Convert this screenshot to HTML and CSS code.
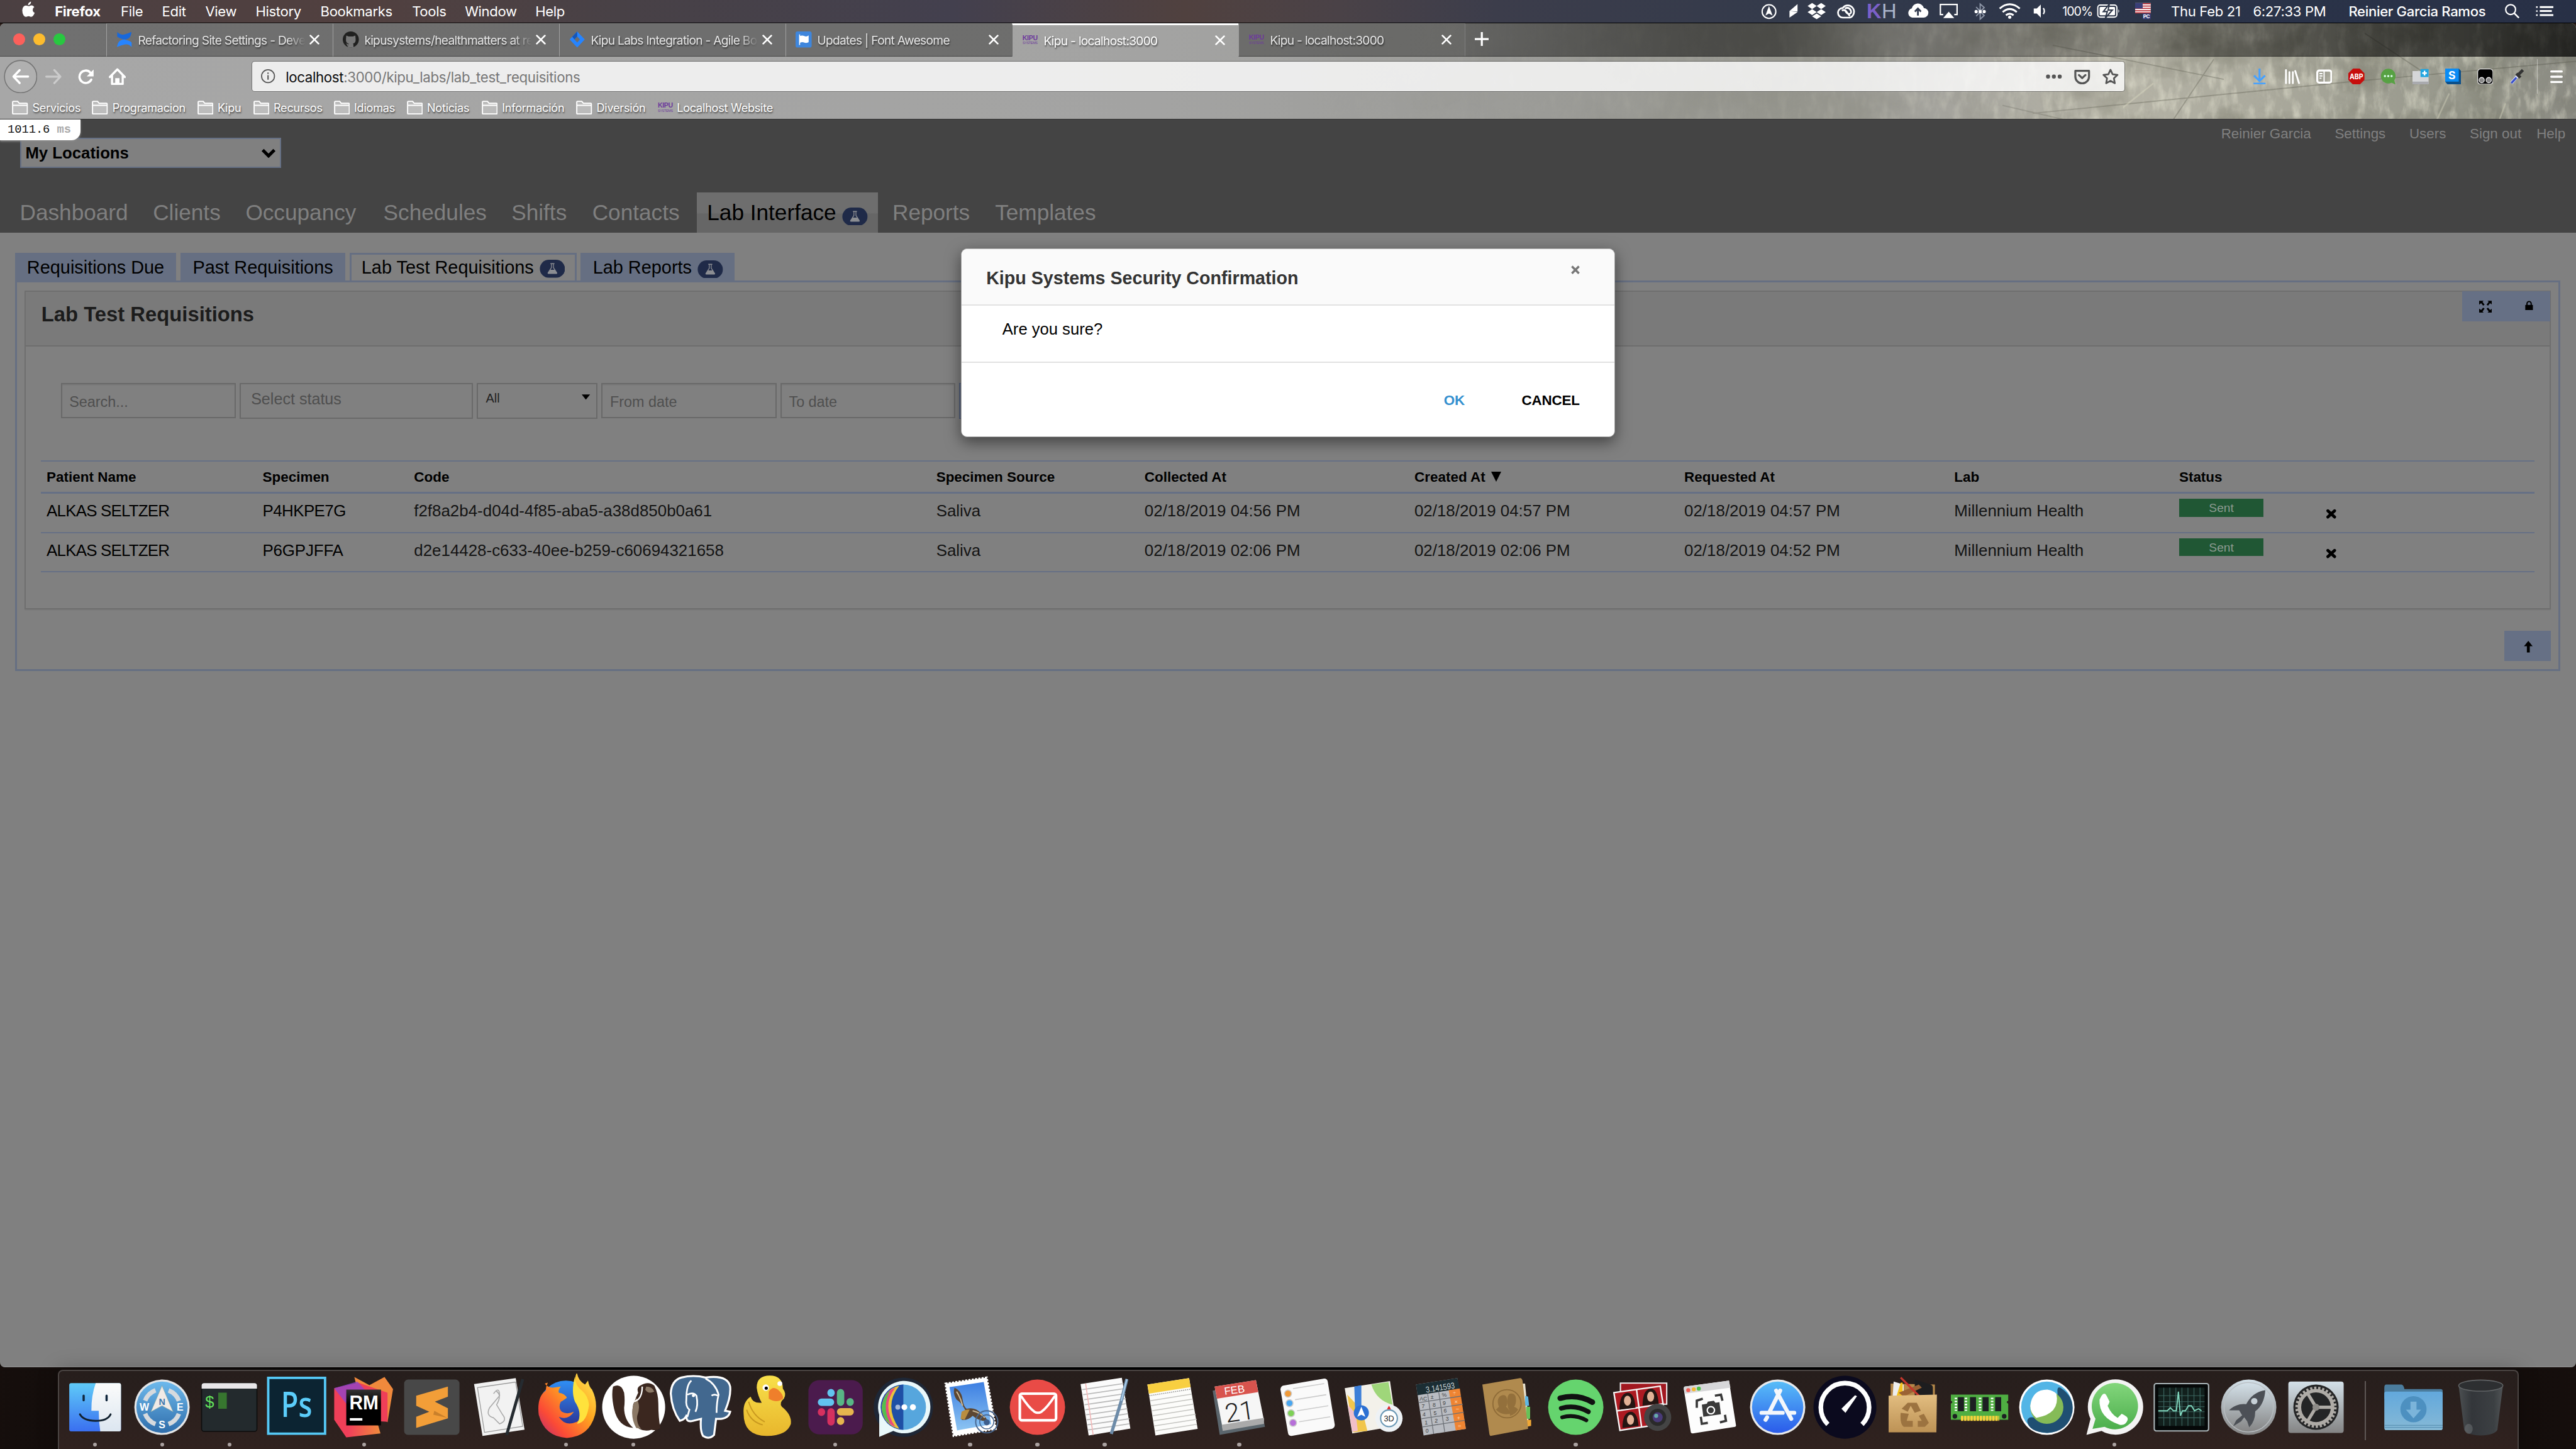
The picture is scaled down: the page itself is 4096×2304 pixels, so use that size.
FILE: index.html
```html
<!DOCTYPE html>
<html lang="en">
<head>
<meta charset="utf-8">
<title>Kipu - localhost:3000</title>
<link rel="stylesheet" href="styles.css">
</head>
<body>
<svg class="defs" width="0" height="0" aria-hidden="true">
  <defs>
    <symbol id="close" viewBox="0 0 10 10"><path d="M1 1l8 8M9 1L1 9" stroke="#fff" stroke-width="1.7" stroke-linecap="round"/></symbol>
    <symbol id="folder" viewBox="0 0 16 14"><path d="M.7 12V1.500q0-.8.8-.8h4.200l1.600 2h7.200q.8 0 .8.8V12.500q0 .8-.8.8h-13q-.8 0-.8-.8zM.7 4.700h14.600" fill="#fff" fill-opacity=".25" stroke="#fff" stroke-width="1.200"/></symbol>
    <symbol id="flask" viewBox="0 0 25 18"><rect width="25" height="18" rx="9" fill="#1f2a48"/><path d="M10.500 3.500h4v.9h-.6v3.200l3.300 5.200q.5 1.200-.7 1.200h-8q-1.200 0-.7-1.200l3.300-5.200V4.400h-.6z" fill="#8b8d92"/><path d="M11.900 4.400h1.200v3.500l1.300 2.100h-3.800l1.300-2.100z" fill="#1f2a48"/></symbol>
    <symbol id="cross" viewBox="0 0 11 10"><path d="M2.200 2L8.800 8.200M8.800 2L2.200 8.200" stroke="#000" stroke-width="3" stroke-linecap="round"/></symbol>
    <linearGradient id="finderL" x2="0" y2="1"><stop offset="0" stop-color="#5fcbf8"/><stop offset="1" stop-color="#3a6ff0"/></linearGradient>
    <linearGradient id="white" x2="0" y2="1"><stop offset="0" stop-color="#fbfbfb"/><stop offset="1" stop-color="#dce6f0"/></linearGradient>
    <linearGradient id="compass" x2="0" y2="1"><stop offset="0" stop-color="#6db9ec"/><stop offset="1" stop-color="#2f6dab"/></linearGradient>
    <linearGradient id="store" x2="0" y2="1"><stop offset="0" stop-color="#58bdf8"/><stop offset="1" stop-color="#2a5bea"/></linearGradient>
    <linearGradient id="fox" x1="1" y1="0" x2="0" y2="1"><stop offset="0" stop-color="#fff05a"/><stop offset=".4" stop-color="#ffa51f"/><stop offset=".75" stop-color="#fb4a36"/><stop offset="1" stop-color="#b02a7a"/></linearGradient>
    <linearGradient id="globe" x2="0" y2="1"><stop offset="0" stop-color="#2f8ff5"/><stop offset="1" stop-color="#2a2080"/></linearGradient>
    <linearGradient id="rmg" x2="1" y2="0"><stop offset="0" stop-color="#f03a5c"/><stop offset="1" stop-color="#f08b3c"/></linearGradient>
    <linearGradient id="dark" x2="0" y2="1"><stop offset="0" stop-color="#333"/><stop offset=".4" stop-color="#000"/></linearGradient>
    <linearGradient id="duck" x2="0" y2="1"><stop offset="0" stop-color="#f8e04a"/><stop offset="1" stop-color="#e8b62c"/></linearGradient>
    <linearGradient id="sky" x2="0" y2="1"><stop offset="0" stop-color="#3d7fe2"/><stop offset="1" stop-color="#8cc4f2"/></linearGradient>
    <linearGradient id="wa" x2="0" y2="1"><stop offset="0" stop-color="#83d67c"/><stop offset="1" stop-color="#4cae4c"/></linearGradient>
    <linearGradient id="steel" x2="0" y2="1"><stop offset="0" stop-color="#d3e0e8"/><stop offset="1" stop-color="#848484"/></linearGradient>
    <linearGradient id="bag" x2="0" y2="1"><stop offset="0" stop-color="#e2bd80"/><stop offset="1" stop-color="#bd9255"/></linearGradient>
    <linearGradient id="bluef" x2="0" y2="1"><stop offset="0" stop-color="#62a8dc"/><stop offset="1" stop-color="#86b9d6"/></linearGradient>
    <linearGradient id="trash" x2="1" y2="0"><stop offset="0" stop-color="#4c5052"/><stop offset=".3" stop-color="#33363a"/><stop offset=".8" stop-color="#3c4043"/><stop offset="1" stop-color="#515456"/></linearGradient>
  </defs>
</svg>
<div class="desktop">
  <header class="menubar">
    <nav class="menus">
      <svg class="apple" viewBox="0 0 14 17"><path d="M9.900.2q.2 1.600-.8 2.700T6.900 4Q6.700 2.500 7.700 1.500T9.900.2zM13.300 6q-1.600 1-1.600 2.800 0 2.200 2 3-.5 1.500-1.500 2.900-.9 1.300-2 1.300-.6 0-1.400-.4-.7-.3-1.400-.3-.8 0-1.500.3-.8.4-1.400.4-1.200 0-2.300-1.700Q.9 12.300.9 9.400.9 7 2 5.700q1.100-1.400 2.700-1.400.8 0 1.600.4.800.3 1.200.3t1.300-.4q.9-.4 1.700-.4 1.800.1 2.800 1.800z" fill="#fff"/></svg>
      <b>Firefox</b><span>File</span><span>Edit</span><span>View</span><span>History</span><span>Bookmarks</span><span>Tools</span><span>Window</span><span>Help</span>
    </nav>
    <div class="status">
      <svg viewBox="0 0 17 22"><circle cx="8" cy="11.500" r="6.800" fill="none" stroke="#fff" stroke-width="1.300"/><path d="M8 6l3.600 9.500L8 13.500l-3.600 2z" fill="#fff"/></svg>
      <svg viewBox="0 0 12 22"><path d="M9.500 4v7.500L1.500 11zM1.500 11v6.500l8-5.500z" fill="#fff"/></svg>
      <svg viewBox="0 0 22 22"><path d="M6.500 3l4.500 3-4.500 3L2 6zM15.500 3L20 6l-4.500 3L11 6zM6.500 9l4.500 3-4.500 3L2 12zM15.500 9l4.500 3-4.500 3-4.500-3zM11 13.500l4.500 2.800L11 19l-4.500-2.700z" fill="#fff"/></svg>
      <svg viewBox="0 0 22 22"><g fill="none" stroke="#fff" stroke-width="1.700"><path d="M7 17.500a4.800 4.800 0 010-9.600 6.200 6.200 0 1 1 7 9.600z"/><path d="M6 10.500q3-1.500 5 1.500l3 4M9 8.500q4-2 6 2 1 3-2 3.500-3-1-3.500-4"/></g></svg>
      <span class="kh"><b>K</b><span>H</span></span>
      <svg viewBox="0 0 22 22"><path d="M5.500 17.500a4.700 4.700 0 01-.6-9.200 6.200 6.200 0 0112-.4 4.800 4.800 0 01-.6 9.600z" fill="#fff"/><path d="M11 15.500V9M8 11.500l3-3 3 3" stroke="#333c50" stroke-width="1.800" fill="none"/></svg>
      <svg viewBox="0 0 22 22"><path d="M5.500 14.500H2.700v-10h16.600v10h-2.800" fill="none" stroke="#fff" stroke-width="1.400"/><path d="M11 11.500l5.500 6.500h-11z" fill="#fff"/></svg>
      <svg viewBox="0 0 22 22"><path d="M7 7l8 8.500-4 3.500V4l4 3.500L7 16" fill="none" stroke="#8e97a8" stroke-width="1.200"/><g fill="#fff"><circle cx="7" cy="11.500" r="1.600"/><circle cx="11" cy="11.500" r="1.600"/><circle cx="15" cy="11.500" r="1.600"/></g></svg>
      <svg viewBox="0 0 22 22"><g fill="none" stroke="#fff" stroke-width="1.900"><path d="M1 8.500q10-8.500 20 0M4 12q7-6 14 0M7.200 15.200q3.800-3 7.600 0"/></g><circle cx="11" cy="17" r="1.600" fill="#fff"/></svg>
      <svg viewBox="0 0 18 22"><path d="M3 8.500h3l4-4v13l-4-4H3z" fill="#fff"/><path d="M12.500 8q2 3 0 6" fill="none" stroke="#fff" stroke-width="1.400"/></svg>
      <span class="pct">100%</span>
      <svg viewBox="0 0 24 22"><rect x="1" y="5" width="19" height="12" rx="2.500" fill="none" stroke="#fff" stroke-width="1.200"/><rect x="2.800" y="6.800" width="15.400" height="8.400" rx="1" fill="#fff"/><path d="M21.500 9.200q1.600 1.800 0 3.600z" fill="#fff"/><path d="M12.500 4l-6 7.500h4L8.500 18l7-8h-4.200z" fill="#fff" stroke="#2d3649" stroke-width="1.300"/></svg>
      <svg viewBox="0 0 16 22"><path fill="#fff" d="M0 3h15.500v10H0z"/><path stroke="#b8303a" stroke-width="1.100" d="M0 3.600h15.500M0 6h15.500M0 8.400h15.500M0 10.700h15.500M0 12.700h15.500"/><path fill="#3a3f78" d="M0 3h7.500v5.500H0zM7.500 13.500h8V19h-8z"/><text x="8" y="18.200" font-size="5" font-weight="700" fill="#fff">PC</text></svg>
      <span class="date">Thu Feb 21</span><span class="time">6:27:33 PM</span><span class="user">Reinier Garcia Ramos</span>
      <svg viewBox="0 0 16 22"><circle cx="6.300" cy="9.500" r="4.900" fill="none" stroke="#fff" stroke-width="1.400"/><path d="M9.800 13l4.700 4.700" stroke="#fff" stroke-width="1.600"/></svg>
      <svg viewBox="0 0 18 22"><path d="M4 7h13.500M4 11h12M4 15h13.500" stroke="#fff" stroke-width="1.900"/><path d="M.3 7h1.600M.3 11h1.600M.3 15h1.600" stroke="#fff" stroke-width="1.500"/></svg>
    </div>
  </header>

  <main class="window">
    <div class="chrome">
      <svg class="texture" viewBox="0 0 1300 96" preserveAspectRatio="none">
        <filter id="grain" x="0" y="0" width="100%" height="100%"><feTurbulence type="fractalNoise" baseFrequency=".11 .045" numOctaves="5" seed="8"/><feColorMatrix values="0 0 0 0 .85  0 0 0 0 .84  0 0 0 0 .7  1.800 0 0 0 -.8"/></filter>
        <filter id="soot" x="0" y="0" width="100%" height="100%"><feTurbulence type="fractalNoise" baseFrequency=".016 .022" numOctaves="6" seed="3"/><feColorMatrix values="0 0 0 0 .15  0 0 0 0 .15  0 0 0 0 .11  0 1.900 0 0 -.85"/></filter>
        <rect width="1300" height="96" filter="url(#grain)"/>
        <rect width="1300" height="96" filter="url(#soot)"/>
        <path d="M760 90L1080 58l220-20M780 22l170 34M790 96l-60-14M1090 10l60 40M900 96l40-60" stroke="#444438" stroke-opacity=".4" stroke-width="1.200" fill="none"/>
        <path d="M1162 96l12-26M1224 96l6-16M850 84l30-24" stroke="#e8e6cc" stroke-opacity=".5" stroke-width="1.600" fill="none"/>
      </svg>
      <div class="tabs">
        <div class="lights"><i></i><i></i><i></i></div>
        <div class="tab"><svg class="fav" viewBox="0 0 16 16"><path d="M1 .5q3 3.500 7 2.500t7-2.500Q14.500 8 8 8 3 7 .8 5z" fill="#1868db"/><path d="M15.200 15.500q-3-3.500-7-2.500t-7.500 2.500Q1.500 8 8 8q5 1 7.200 3z" fill="#2684ff"/></svg><span>Refactoring Site Settings - Develop</span><svg class="x"><use href="#close"/></svg></div>
        <div class="tab"><svg class="fav" viewBox="0 0 16 16"><circle cx="8" cy="8" r="8" fill="#20201f"/><path d="M5.500 16v-3.500q-2 .3-2.600-1.500M5.800 12q-3-.6-2.600-4.500L3.500 4l2.300 1h4.400l2.300-1 .3 3.500q.4 3.900-2.600 4.500l.4 1V16H5.500z" fill="#777"/></svg><span>kipusystems/healthmatters at reports</span><svg class="x"><use href="#close"/></svg></div>
        <div class="tab"><svg class="fav" viewBox="0 0 16 16"><path d="M8 0l7.500 8L8 16 .5 8zM8 5L5.300 8 8 11l2.700-3z" fill="#2684ff" fill-rule="evenodd"/><path d="M8 0v5L5.300 8 3 5.300z" fill="#1556b8"/></svg><span>Kipu Labs Integration - Agile Board</span><svg class="x"><use href="#close"/></svg></div>
        <div class="tab"><svg class="fav" viewBox="0 0 16 16"><rect width="16" height="16" rx="2" fill="#3f86dc"/><path d="M4 3v10.500M4.500 5q2-1 4 0t4-.2v5.500q-2 1-4 .2t-4 .2z" fill="#fff" stroke="#fff"/></svg><span>Updates | Font Awesome</span><svg class="x"><use href="#close"/></svg></div>
        <div class="tab active"><span class="kipu"><b>KIPU</b><i>SYSTEMS</i></span><span>Kipu - localhost:3000</span><svg class="x"><use href="#close"/></svg></div>
        <div class="tab"><span class="kipu"><b>KIPU</b><i>SYSTEMS</i></span><span>Kipu - localhost:3000</span><svg class="x"><use href="#close"/></svg></div>
        <div class="strip"><svg class="plus" viewBox="0 0 14 14"><path d="M7 0v14M0 7h14" stroke="#fff" stroke-width="2"/></svg></div>
      </div>
      <div class="toolbar">
        <svg class="back" viewBox="0 0 34 34"><circle cx="17" cy="17" r="16.300" fill="#fff" fill-opacity=".1" stroke="#757575" stroke-width="1"/><path d="M24.500 17H10M16 10.500L9.800 17l6.200 6.500" fill="none" stroke="#fff" stroke-width="2.200" stroke-linecap="round" stroke-linejoin="round"/></svg>
        <svg class="fwd" viewBox="0 0 16 16"><path d="M1 8h13M9 1.500L15 8l-6 6.500" fill="none" stroke="#cbcbcb" stroke-width="2" stroke-linecap="round" stroke-linejoin="round"/></svg>
        <svg class="reload" viewBox="0 0 16 16"><path d="M13.200 11A6.200 6.200 0 1 1 12 3.700l1.500 2" fill="none" stroke="#fff" stroke-width="2.200" stroke-linecap="round"/><path d="M15.500 1v6.800H8.700z" fill="#fff"/></svg>
        <svg class="home" viewBox="0 0 16 16"><path d="M1 8.500L8 1.300l7 7.200M3 7v8h10V7" fill="none" stroke="#fff" stroke-width="2" stroke-linejoin="round" stroke-linecap="round"/><path d="M6.500 15v-5h3v5" fill="#fff" stroke="#fff"/></svg>
        <div class="url">
          <svg class="info" viewBox="0 0 14 14"><circle cx="7" cy="7" r="6.400" fill="none" stroke="#555" stroke-width="1.100"/><path d="M7 6v4.500M7 3.300v1.400" stroke="#555" stroke-width="1.300"/></svg>
          <span class="addr"><b>localhost</b>:3000/kipu_labs/lab_test_requisitions</span>
          <svg class="dots" viewBox="0 0 16 16"><g fill="#555"><circle cx="2.200" cy="8" r="2"/><circle cx="8" cy="8" r="2"/><circle cx="13.800" cy="8" r="2"/></g></svg>
          <svg class="pocket" viewBox="0 0 16 16"><path d="M1.200 2.300h13.600V8a6.800 6.800 0 01-13.600 0zM4.800 6.500L8 9.500l3.200-3" fill="none" stroke="#555" stroke-width="2" stroke-linejoin="round" stroke-linecap="round"/></svg>
          <svg class="star" viewBox="0 0 16 16"><path d="M8 1.200l2.100 4.500 4.900.6-3.600 3.400.9 4.900L8 12.200l-4.300 2.400.9-4.900L1 6.300l4.900-.6z" fill="none" stroke="#555" stroke-width="1.700" stroke-linejoin="round"/></svg>
        </div>
        <div class="addons">
          <svg viewBox="0 0 16 16"><path d="M8 0v12M2.500 7L8 12.300 13.500 7M2 15h12" stroke="#45a1ff" stroke-width="1.900" fill="none"/></svg>
          <svg viewBox="0 0 16 16"><path d="M1.800 1.500v13M5.200 3.500v11M8.600 3.500v11M11 2.500l3.700 12" stroke="#fff" stroke-width="1.800" stroke-linecap="round"/></svg>
          <svg viewBox="0 0 16 16"><rect x="1" y="2" width="14" height="12" rx="2" fill="none" stroke="#fff" stroke-width="2"/><path d="M7.800 2v12M3.200 5h3M3.200 7.300h3M3.200 9.600h2" stroke="#fff" stroke-width="1.200"/></svg>
          <svg viewBox="0 0 16 16"><path d="M4.700 0h6.600L16 4.700v6.600L11.300 16H4.700L0 11.300V4.700z" fill="#c70d0c"/><text x="8" y="10.900" text-anchor="middle" font-size="7.500" textLength="13.500" lengthAdjust="spacingAndGlyphs" font-weight="700" fill="#fff">ABP</text></svg>
          <svg viewBox="0 0 16 16"><circle cx="7.800" cy="7.500" r="7.300" fill="#57a143"/><path d="M9 13l6 3-1.500-5z" fill="#57a143"/><g fill="#dfe"><circle cx="4.500" cy="7.500" r="1.100"/><circle cx="7.800" cy="7.500" r="1.100"/><circle cx="11.100" cy="7.500" r="1.100"/></g></svg>
          <svg viewBox="0 0 16 16"><path d="M0 2.500h16v13H0z" fill="#d5d6d8"/><path d="M0 13h16v2.600H0z" fill="#a9aaae"/><path d="M8 .5h8v8H8z" fill="#23a5e0"/><path d="M12 2.200v4.600M9.700 4.500h4.600" stroke="#fff" stroke-width="1.500"/></svg>
          <svg viewBox="0 0 16 16"><path d="M0 0h13.500L16 2.500V16H2.500L0 13z" fill="#0b4f8a"/><path d="M0 0h13.500v13H0z" fill="#0a8cf5"/><text x="6.800" y="10.600" text-anchor="middle" font-size="11" font-weight="700" fill="#fff">S</text></svg>
          <svg viewBox="0 0 16 16"><rect x=".4" y=".4" width="15.200" height="15.200" rx="3" fill="#000" stroke="#ddd" stroke-width=".8"/><circle cx="4.400" cy="11.500" r="2.600" fill="#888" stroke="#eee" stroke-width=".8"/><circle cx="11.400" cy="11.500" r="2.600" fill="#888" stroke="#eee" stroke-width=".8"/></svg>
          <svg viewBox="0 0 16 16"><path d="M2 14.500L8.500 7" stroke="#dfe4ff" stroke-width="3"/><path d="M2 14.500L7 9" stroke="#3a50c8" stroke-width="2"/><path d="M8.500 6.500L13.500 1.500M7 5l4 4" stroke="#333" stroke-width="3"/></svg>
        </div>
        <i class="rule"></i>
        <svg class="burger" viewBox="0 0 12 12"><path d="M1 1h10M1 6h10M1 11h10" stroke="#fff" stroke-width="2" stroke-linecap="round"/></svg>
      </div>
      <div class="bookmarks">
        <span><svg><use href="#folder"/></svg>Servicios</span><span><svg><use href="#folder"/></svg>Programacion</span><span><svg><use href="#folder"/></svg>Kipu</span><span><svg><use href="#folder"/></svg>Recursos</span><span><svg><use href="#folder"/></svg>Idiomas</span><span><svg><use href="#folder"/></svg>Noticias</span><span><svg><use href="#folder"/></svg>Información</span><span><svg><use href="#folder"/></svg>Diversión</span><span><i class="kipu"><b>KIPU</b><i>SYSTEMS</i></i>Localhost Website</span>
      </div>
    </div>

    <div class="page">
      <div class="top">
        <div class="row">
          <div class="select">My Locations<svg viewBox="0 0 14 9"><path d="M1.500 1.500L7 7l5.500-5.500" fill="none" stroke="#000" stroke-width="3"/></svg></div>
          <div class="links"><span>Reinier Garcia</span><span>Settings</span><span>Users</span><span>Sign out</span><span>Help</span></div>
        </div>
        <nav class="mainnav"><a>Dashboard</a><a>Clients</a><a>Occupancy</a><a>Schedules</a><a>Shifts</a><a>Contacts</a><a class="on">Lab Interface<svg class="flask"><use href="#flask"/></svg></a><a>Reports</a><a>Templates</a></nav>
        <div class="profiler">1011.6 <b>ms</b></div>
      </div>
      <div class="subnav"><a>Requisitions Due</a><a>Past Requisitions</a><a class="on">Lab Test Requisitions<svg class="flask"><use href="#flask"/></svg></a><a>Lab Reports<svg class="flask"><use href="#flask"/></svg></a></div>
      <section class="content">
        <div class="panel">
          <div class="phead"><h1>Lab Test Requisitions</h1>
            <div class="pbtns">
              <svg viewBox="0 0 13 12"><path d="M0 0h4.500L3.400 1.200 5.500 4 4 5 2 2.500 0 4zM13 0H8.500l1.100 1.200L7.500 4 9 5l2-2.500L13 4zM0 12h4.500l-1.100-1.200L5.500 8 4 7 2 9.500 0 8zM13 12H8.500l1.100-1.200L7.500 8 9 7l2 2.500L13 8z"/></svg>
              <svg class="lock" viewBox="0 0 8 10"><path d="M0 4.500h8V10H0z"/><path d="M1.800 5V3.200a2.200 2.300 0 014.400 0V5" fill="none" stroke="#000" stroke-width="1.300"/></svg>
            </div>
          </div>
          <div class="filters">
            <div class="input">Search...</div><div class="pick">Select status</div><div class="all">All<svg viewBox="0 0 8 5"><path d="M0 0h8L4 5z"/></svg></div><div class="input">From date</div><div class="input">To date</div><div class="go"></div>
          </div>
          <table>
            <colgroup><col class="c1"><col class="c2"><col class="c3"><col class="c4"><col class="c5"><col class="c5"><col class="c5"><col class="c8"><col class="c9"><col></colgroup>
            <thead><tr><th>Patient Name</th><th>Specimen</th><th>Code</th><th>Specimen Source</th><th>Collected At</th><th>Created At <svg class="sort" viewBox="0 0 10 10"><path d="M0 0h10L5 10z"/></svg></th><th>Requested At</th><th>Lab</th><th>Status</th><th></th></tr></thead>
            <tbody>
              <tr><td class="name">ALKAS SELTZER</td><td class="spec">P4HKPE7G</td><td>f2f8a2b4-d04d-4f85-aba5-a38d850b0a61</td><td>Saliva</td><td>02/18/2019 04:56 PM</td><td>02/18/2019 04:57 PM</td><td>02/18/2019 04:57 PM</td><td>Millennium Health</td><td><span class="sent">Sent</span></td><td><svg class="del"><use href="#cross"/></svg></td></tr>
              <tr><td class="name">ALKAS SELTZER</td><td class="spec alt">P6GPJFFA</td><td>d2e14428-c633-40ee-b259-c60694321658</td><td>Saliva</td><td>02/18/2019 02:06 PM</td><td>02/18/2019 02:06 PM</td><td>02/18/2019 04:52 PM</td><td>Millennium Health</td><td><span class="sent">Sent</span></td><td><svg class="del"><use href="#cross"/></svg></td></tr>
            </tbody>
          </table>
        </div>
        <div class="up"><svg viewBox="0 0 9 12"><path d="M4.500 0L9 5.500H6V12H3V5.500H0z"/></svg></div>
      </section>
    </div>
  </main>

  <div class="modal">
    <div class="mhead">Kipu Systems Security Confirmation<svg viewBox="0 0 10 9"><path d="M1.500 1l7 7M8.500 1l-7 7" stroke="#777" stroke-width="2.200"/></svg></div>
    <div class="mbody">Are you sure?</div>
    <div class="mfoot"><b class="ok">OK</b><b>CANCEL</b></div>
  </div>

  <footer class="dock">
    <div class="app run"><svg viewBox="0 0 67 67"><rect x="8.200" y="9.500" width="51.400" height="48" rx="2" fill="url(#finderL)"/><path d="M34.500 9.500H57.600q2 0 2 2v44q0 2-2 2H39q-1.500-10-1.500-20.500h-7.300Q30 22 34.500 9.500z" fill="url(#white)"/><path d="M22.500 22v4.500M45.300 22v4.500" stroke="#10263c" stroke-width="2.200" stroke-linecap="round"/><path d="M18.800 40.500q3.500 6.500 15.500 6.500t15-6.500" fill="none" stroke="#10202e" stroke-width="1.800" stroke-linecap="round"/></svg></div>
    <div class="app run"><svg viewBox="0 0 67 67"><circle cx="33.500" cy="33.500" r="27.500" fill="#e4e6e8"/><circle cx="33.500" cy="33.500" r="25.500" fill="url(#compass)"/><circle cx="33.500" cy="33.500" r="18" fill="none" stroke="#d6dade" stroke-width="4.500" stroke-dasharray="15 13.270" stroke-dashoffset="-6.600"/><path d="M33.500 12l11 26-11-6-11 6z" fill="#f1eae6" stroke="#8aa" stroke-width=".5"/><g font-size="10" font-weight="700" text-anchor="middle" fill="#fff"><text x="16" y="37">W</text><text x="51.500" y="37">E</text><text x="33.500" y="54.500">S</text><text x="33.500" y="31" font-size="9" fill="#3d78ae">N</text></g></svg></div>
    <div class="app run"><svg viewBox="0 0 67 67"><rect x="6" y="9.500" width="55" height="48" rx="2.500" fill="#232a2d" stroke="#0d0d0d"/><path d="M6 15V12q0-2.500 2.500-2.500h50q2.500 0 2.500 2.500v3z" fill="#e8e6e8"/><text x="9.500" y="33.500" font-size="16" fill="#63e35c">$</text><path d="M22.500 19h8.500v16h-8.500z" fill="#37762f"/></svg></div>
    <div class="app"><svg viewBox="0 0 67 67"><path d="M5.300 4.300h56.500v55.500H5.300z" fill="#0c2432" stroke="#55c8f5" stroke-width="2.400"/><text x="33.500" y="43" text-anchor="middle" font-size="35" textLength="31" lengthAdjust="spacingAndGlyphs" font-family="Open Sans" font-weight="600" fill="#5bcdfa">Ps</text></svg></div>
    <div class="app run"><svg viewBox="0 0 67 67"><path d="M24 3.500l15 8 15-8 8.500 12-5.500 33-28-25z" fill="#f0893c"/><path d="M4 14.500L28 9l29 10v29L26 46l-10 17.500L4 46z" fill="#ef3f58"/><path d="M4 14.500L27 8l13 14-24 8z" fill="#8b46d0" opacity=".75"/><path d="M16 63.500l34-4-4-14-27-4z" fill="url(#rmg)"/><path d="M16 16h34.500v35.500H16z" fill="url(#dark)"/><text x="33.500" y="35.500" text-anchor="middle" font-size="20" textLength="29" lengthAdjust="spacingAndGlyphs" font-weight="700" fill="#fff">RM</text><path d="M19.500 44.300h12.500v2.500H19.500z" fill="#fff"/></svg></div>
    <div class="app"><svg viewBox="0 0 67 67"><rect x="6" y="6" width="55" height="55" rx="4" fill="#484848"/><path d="M49.500 13v10L36.500 28l13 6.500v10L18 54V43l13-5-13-6V22z" fill="#f29e38"/><path d="M36 37l13 7-14-3z" fill="#c9802b"/></svg></div>
    <div class="app"><svg viewBox="0 0 67 67"><path d="M8.600 10.500L50 4.500l8.800 51.300L17 62z" fill="#f2f2f2"/><path d="M12 14l38-5.500 7 44-38 6z" fill="none" stroke="#999" stroke-width=".8"/><path d="M28 20q6-8 6 2l-10 12q-4 8 4 10l6 6q8-3 3-9l-6-10q6-10-1-14" fill="none" stroke="#aaa" stroke-width="1"/><path d="M57 5.500L41 61" stroke="#252b30" stroke-width="3"/></svg></div>
    <div class="app run"><svg viewBox="0 0 67 67"><circle cx="33" cy="34" r="27" fill="url(#globe)"/><path d="M12 10q3 4 8 4l8-1q-3 3-2 6 6 1 8 5-4 3-6 4-3 6 1 10 5 3 12 0-6 9-15 5 6 10 18 5 12-8 6-24-6-8-8-14 0-8 2-11 1 8 8 12l3-4q1 6 4 9 6 12 3 25-6 22-28 23-22-1-28-23-2-18 7-24 0-4 2-8z" fill="url(#fox)"/><path d="M42 3q0 9 7 14 6 5 7 14-2 18-12 19 6-10-2-22-4-10 0-25z" fill="#ffe23c"/></svg></div>
    <div class="app run"><svg viewBox="0 0 67 67"><circle cx="33.500" cy="33.500" r="31.300" fill="#fff"/><path d="M13 13q8-4 11 6 1 8 0 15 0 12 9 20-15-1-19-19-3-13-1-22zM40 12q8-5 14 0 4 8 4 18 0 14 2 24-4 3-9 2-6 2-12-1-9-8-6-24 3-8 5-12-2-5 2-7z" fill="#3b271f"/><path d="M36 24q5 8 1 18-1 8 4 13l-5-1q-8-14 0-30zM46 13q6 0 8 5-6 3-9-2z" fill="#8b7865"/><path d="M32 20q-2 10 4 7t6-14" fill="none" stroke="#fff" stroke-width="1.500"/></svg></div>
    <div class="app"><svg viewBox="0 0 67 67"><path d="M14 4Q4 7 3.500 20q1 16 9 27 5-1 7-6-2 8 6 6l8-2q-1 12 2 17 6 4 11-1l2-16q12 1 14-7l-5-1q6-14 5-24Q60 1 38 4 26 1 14 4z" fill="#42688f" stroke="#fff" stroke-width="2"/><path d="M24 7q-5 4-5 18-1 8 3 11l-2 7M38 5q10 5 13 16-2 8-2 18M20 21q6-3 9 1 2 10-1 16M44 22q3-2 6 0" fill="none" stroke="#fff" stroke-width="1.700"/><circle cx="26" cy="22" r="1.500" fill="#fff"/></svg></div>
    <div class="app"><svg viewBox="0 0 67 67"><path d="M22 14q0-12 13-12t13 13q4 5 1 10-5 4-2 8 10 8 9 17-4 12-24 12-23 0-23-22-1-12 7-17 2 7 11 6-4-7-5-15z" fill="url(#duck)"/><path d="M34 18q4-6 9-2 6 5 5 9-6 5-14 0z" fill="#ef7f2b"/><circle cx="31" cy="14" r="3.200" fill="#fff"/><circle cx="31.500" cy="14.500" r="1.600"/><circle cx="45" cy="10" r="2.400" fill="#fff"/><path d="M14 28q4 14 16 20M12 36q4 12 16 15" stroke="#c9991f" stroke-width="1.200" fill="none"/></svg></div>
    <div class="app run"><svg viewBox="0 0 67 67"><rect x="6.500" y="6.500" width="54" height="54" rx="11" fill="#4b1b4d"/><g stroke-width="7.300" stroke-linecap="round" fill="none"><path d="M29 19v.5M19.500 28.500h9" stroke="#62c4ef"/><path d="M38.500 19v9.500M48 28.500v-.5" stroke="#58b585"/><path d="M38.500 38h9.500M38.500 47.500V47" stroke="#e5b54e"/><path d="M29 38v10M19.500 38v.5" stroke="#d5305f"/></g></svg></div>
    <div class="app"><svg viewBox="0 0 67 67"><circle cx="34" cy="33.500" r="29.500" fill="#1e2736"/><path d="M10 63V41A26 26 0 1 1 24 57z" fill="#e9f8fa"/><circle cx="34" cy="33.500" r="22.500" fill="#56a6dd"/><path d="M34 11a22.500 22.500 0 000 45z" fill="#1f4fa5"/><path d="M30 12q-16 20 0 43-16-4-17.500-21Q14 16 30 12z" fill="#e9c23d"/><path d="M26 14q-14 18 0 39-12-5-13.500-19Q14 18 26 14z" fill="#ea4a7e"/><path d="M21 17q-9 16 0 33-7-5-8.500-16Q14 22 21 17z" fill="#53c24c"/><g fill="#fff"><circle cx="28.500" cy="33.500" r="2.500" opacity=".6"/><circle cx="35" cy="33.500" r="2.900"/><circle cx="43.500" cy="33.500" r="3"/></g></svg></div>
    <div class="app run"><svg viewBox="0 0 67 67"><path d="M9 10l41-6 9 51-42 7z" fill="#fff" stroke="#fff" stroke-width="2" stroke-dasharray="2 1.300"/><path d="M13 13.500l34-5 7.500 42-34 6z" fill="url(#sky)"/><path d="M18 14q7 3 8 12 1 7 4 9 8-2 14 4 5 4 7 8-8 1-15-5-5 5-11 4-1-6 4-9-4-8-9-11-4-6-2-12z" fill="#5c4632"/><path d="M20 18q4 6 6 14M36 37q8 2 12 7" stroke="#c9b796" stroke-width="1.300" fill="none"/><path d="M25 38q4-3 8-2l-5 10-4-1z" fill="#b98d3f"/><circle cx="50" cy="48" r="11" fill="none" stroke="#49678f" stroke-width="1.200"/><circle cx="50" cy="48" r="7" fill="none" stroke="#49678f" stroke-width="1"/><circle cx="50" cy="48.500" r="3" fill="#3f5f8c"/></svg></div>
    <div class="app run"><svg viewBox="0 0 67 67"><circle cx="33.500" cy="33.500" r="27.500" fill="#e94b46"/><rect x="16" y="20" width="36" height="26.500" rx="2" fill="none" stroke="#fff" stroke-width="2.600"/><path d="M17 22q8 12 13.500 16 3.500 2 7 0Q43 34 51 22" fill="none" stroke="#fff" stroke-width="2.400"/></svg></div>
    <div class="app run"><svg viewBox="0 0 67 67"><path d="M9.500 10.500l41-6.300 8.500 50.500L17.500 61.500z" fill="#fbfbfb"/><path d="M11 16l41-6M12 21l41-6M13 26l41-6M13.500 31l41-6M14 36l41-6M15 41l41-6M15.500 46l41-6M16 51l42-6M17 56l41-6" stroke="#bbb" stroke-width="1.100"/><path d="M14.500 10l7.500 51" stroke="#f3b6b6"/><path d="M55.500 5.500L50 27 40 60" stroke="#6d8ba8" stroke-width="3.200" fill="none"/><path d="M55.500 5.500L50 27" stroke="#a8cbe8" stroke-width="1.500"/></svg></div>
    <div class="app"><svg viewBox="0 0 67 67"><path d="M9 11l41.500-6.500L59 55 17 61.500z" fill="#fcfcfa"/><path d="M9 11l41.500-6.500 1.500 9L10.500 20z" fill="#f8cf40"/><path d="M11 22l41-6.500" stroke="#888" stroke-dasharray="1 1"/><path d="M12 27l41-6.500M12.500 32l41-6.500M13.500 37l41-6.500M14 42l41-6.500M15 47l42-6.500M16 52l42-6.500M17 57l41-6.500" stroke="#c6c6c2" stroke-width="1"/></svg></div>
    <div class="app run"><svg viewBox="0 0 67 67"><path d="M7 17l43-8 9 44-45 8z" fill="#5b666d"/><path d="M9 13l41-6.500 8 40L17 55z" fill="#f6f6f6"/><path d="M9 13l41-6.500 2.300 12L11.300 25z" fill="#d8544e"/><path d="M16 51l42-7v6l-41 7z" fill="#aaa"/><g transform="rotate(-8 33 33)" text-anchor="middle"><text x="31" y="19.500" font-size="10.500" fill="#fff">FEB</text><text x="33" y="47" font-size="26" font-family="Roboto" font-weight="300" fill="#222">21</text></g></svg></div>
    <div class="app"><svg viewBox="0 0 67 67"><path d="M10 12l41-7q3 0 3.500 3l7 43q0 3-3 4l-40 7q-3 0-3.500-3L7.500 16q0-3 2.500-4z" fill="#fafafa"/><path d="M20 15l31-5M22 26l31-5M24 37l31-5M26 48l31-5" stroke="#ccc"/><g stroke="#ccc"><circle cx="15" cy="20" r="3.500" fill="#f09a38"/><circle cx="16.500" cy="29.500" r="3.500" fill="#4aa7f0"/><circle cx="18" cy="39.500" r="3.500" fill="#7ed156"/><circle cx="20" cy="49" r="3.500" fill="#b66fd8"/></g></svg></div>
    <div class="app"><svg viewBox="0 0 67 67"><path d="M4.500 14.500l45-7L56 52l-44 7.500z" fill="#f3f1ea"/><path d="M31 11l17-2.500L52 31q-16-4-21-20z" fill="#9fd67a"/><path d="M7 21l15 16 5 20-14 1.500z" fill="#f1c64c"/><path d="M7.500 31l8 9 2 17-5.500 1z" fill="#f1bfc9"/><path d="M14 13l7-1.500V42h-6z" fill="#3c7fd8"/><circle cx="21" cy="39" r="7.500" fill="#2d71d3"/><path d="M21 33l4 10-4-2-4 2z" fill="#fff"/><circle cx="48.500" cy="44.500" r="13.500" fill="#eef2f5"/><circle cx="48.500" cy="44.500" r="8.300" fill="#fff" stroke="#6a98b5" stroke-width="1.300"/><text x="48.500" y="47.500" text-anchor="middle" font-size="8" fill="#222">3D</text><path d="M48.500 32l2 3.500h-4z" fill="#e02020"/></svg></div>
    <div class="app"><svg viewBox="0 0 67 67"><path d="M8.500 11l41-6.500L58 55 16 61.500z" fill="#b9bcc2"/><path d="M8.500 11l41-6.500L52 15 10 21.500z" fill="#1b2d33"/><path d="M41 16.500l11-1.600L58 55l-10 1.600z" fill="#ee8432"/><path d="M11 29l42-6.500M12 37l43-6.500M14 45l42-6.500M15 53l42-6.500M20 20l6 40M31 18l6 40" stroke="#6c7076" stroke-width=".8"/><g transform="rotate(-9 33 33)"><text x="50" y="17" text-anchor="end" font-size="8.500" textLength="29" lengthAdjust="spacingAndGlyphs" fill="#c8d4d6">3.141593</text></g><g font-size="5.500" fill="#444"><text x="12" y="27">AC</text><text x="23" y="25">±</text><text x="34" y="23">%</text><text x="14" y="34.500">7</text><text x="25" y="33">8</text><text x="35" y="31">9</text><text x="15" y="42.500">4</text><text x="26" y="41">5</text><text x="36" y="39">6</text><text x="17" y="50.500">1</text><text x="27" y="49">2</text><text x="38" y="47">3</text><text x="18" y="58.500">0</text></g><g font-size="6" fill="#fbd9b8"><text x="45" y="21.500">÷</text><text x="46.500" y="30">×</text><text x="48" y="37.500">−</text><text x="49" y="46">+</text><text x="50" y="54">=</text></g></svg></div>
    <div class="app"><svg viewBox="0 0 67 67"><path d="M45 10h5l4 42-7 4z" fill="#e9e2cf"/><path d="M50 22l3 1 1 9h-4z" fill="#5fb7e4"/><path d="M51 33h4v12h-4z" fill="#67c258"/><path d="M51 46h5v6l-5 1z" fill="#f0a836"/><path d="M7.500 11L45 4.500q2 0 2.500 3L53 55 15.500 62q-1-1-1-2z" fill="#b08a4e"/><circle cx="32" cy="30" r="14" fill="none" stroke="#8f6c38" stroke-width="1.200"/><path d="M26 22q5-2 6 3 1 6-1 8 4 3 4 7-8 2-14-4l3-3q-3-8 2-11zM35 20q6-1 6 6 0 5-2 7 3 1 4 3-3 5-8 6 0-6-2-8-2-12 2-14z" fill="#93703c"/></svg></div>
    <div class="app run"><svg viewBox="0 0 67 67"><circle cx="33.500" cy="33.500" r="27.500" fill="#65d46e"/><g fill="none" stroke="#111" stroke-linecap="round"><path d="M18 24.500q17-4.500 32 4" stroke-width="5.500"/><path d="M19 34.500q14-4 27 3.500" stroke-width="4.600"/><path d="M20 43.500q12-3.500 24 3" stroke-width="3.800"/></g></svg></div>
    <div class="app"><svg viewBox="0 0 67 67"><path d="M11 9.500h46v21H11z" fill="#a21820" stroke="#eee" stroke-width="1.300"/><path d="M4.500 19l46-6.500 6 37-46 7z" fill="#ad1a22" stroke="#f4f4f4" stroke-width="1.500"/><path d="M27 16l5 37M8 37l46-7" stroke="#f4f4f4" stroke-width="1.500"/><g fill="#241512"><path d="M10 36q0-16 8-17 7 0 8 15zM33 32q0-16 8-17 7 0 8 15zM13 54q0-15 8-16 7 0 8 14z"/></g><g fill="#e3b196"><ellipse cx="18" cy="27" rx="3.500" ry="5"/><ellipse cx="41" cy="23" rx="3.500" ry="5"/><ellipse cx="21" cy="46" rx="3.500" ry="5"/></g><circle cx="48" cy="43.500" r="13.500" fill="#444"/><circle cx="48" cy="43.500" r="8.500" fill="#2a2a2a"/><circle cx="48" cy="43.500" r="5" fill="#493a78"/><circle cx="46.500" cy="42" r="2" fill="#6aa"/></svg></div>
    <div class="app"><svg viewBox="0 0 67 67"><path d="M8 13l44-6 7 44.500q0 1-1 1.500L16 59.500q-2 0-2-1.500L7 15z" fill="#fdfdfd"/><path d="M7 15q0-2 1-2l44-6 1.500 7L8.500 20z" fill="#d7d7d9"/><circle cx="11.500" cy="16.500" r="2" fill="#ef5f57"/><circle cx="17" cy="15.700" r="2" fill="#f5b932"/><circle cx="22" cy="15" r="2" fill="#4ec24a"/><g fill="none" stroke="#3a3a3a" stroke-width="2.300"><path d="M20 34v-7l6-2M38 22l6-1 1.500 6M48 41l1 6-6 1.500M24 43l1 7 6-1"/></g><path d="M25 31l5-1 1-2 6-1 1.500 2 4-.5 1.500 12-17.500 2.500z" fill="#3a3a3a"/><circle cx="34" cy="36.500" r="3.600" fill="none" stroke="#fff" stroke-width="1.400"/></svg></div>
    <div class="app"><svg viewBox="0 0 67 67"><circle cx="33.500" cy="33.500" r="27.500" fill="#e8eaec"/><circle cx="33.500" cy="33.500" r="25.500" fill="url(#store)"/><g stroke="#f4f7fb" stroke-width="4" stroke-linecap="round"><path d="M36 17L25.500 38M32 17l15 28M17.500 39h21M44 39h6M23 43.500L21.500 46"/></g></svg></div>
    <div class="app"><svg viewBox="0 0 67 67"><circle cx="33.500" cy="33.500" r="31.300" fill="#0b0a1e"/><path d="M16.500 50.500A24 24 0 1 1 50.500 50.500" fill="none" stroke="#fff" stroke-width="4.600"/><path d="M43.500 21.500l2 1L34 39l-4-4z" fill="#fff"/></svg></div>
    <div class="app"><svg viewBox="0 0 67 67"><path d="M12 10l44 1v12H12z" fill="#b48749"/><path d="M15 8l10 3v12H14z" fill="#eee"/><path d="M36 6l16 5q2 1 2 3v10H36z" fill="#1d1d1f"/><path d="M18 22L22 9h2v13z" fill="#f3c11f"/><path d="M20 19l20-8 3 3-18 9z" fill="#9a6234"/><path d="M22 4l20 20" stroke="#c5362c" stroke-width="2"/><path d="M10 22l48-1-.5 37.500H10z" fill="url(#bag)"/><path d="M29 29h9l4 8-6 2-4-7-3 6-6-3zM45 40l5 9-4 4h-7v-6h4l-3-5zM22 39l8 1-2 7h6v6h-9q-4-3-3-14z" fill="#9c7340"/></svg></div>
    <div class="app"><svg viewBox="0 0 67 67"><path d="M5 21h57v6q-3 1 0 3v16H5V30q3-2 0-3z" fill="#4fae42"/><path d="M10 24v13M20 24v13M34 24v13M46 24v13" stroke="#fff" stroke-width="2.500" stroke-dasharray="1.500 1.500"/><g fill="#1d1f22"><path d="M12 23.500h6v14h-6zM24 23.500h6v14h-6zM36.500 23.500h6v14h-6zM49 23.500h6v14h-6z"/><circle cx="9" cy="42.500" r="2.300"/><circle cx="58" cy="42.500" r="2.300"/></g><path d="M15 44.500h38" stroke="#f5d13c" stroke-width="5" stroke-dasharray="2.500 .6"/></svg></div>
    <div class="app"><svg viewBox="0 0 67 67"><circle cx="33.500" cy="33.500" r="27.500" fill="#fff"/><circle cx="33.500" cy="33.500" r="25.500" fill="#52b5e6"/><path d="M47 14q14 9 12 24-4 20-25 21-19-1-20-12 1-5 8-3 24 0 22-27 0-4 3-3z" fill="#1f4f72"/><circle cx="33.500" cy="33.500" r="16.500" fill="#85bb57"/><path d="M43 20q4 20-20 24-6-5-6-12 2-16 17-16 6 1 9 4z" fill="#fff"/></svg></div>
    <div class="app run"><svg viewBox="0 0 67 67"><path d="M6 61l4-16A27.500 27.500 0 1 1 21 57z" fill="#f4f4f4"/><path d="M12 55l3-10A23 23 0 1 1 24 53z" fill="url(#wa)"/><path d="M21 22q3-4 5 0l3 6q-1 3-2 4 4 9 10 12l4-4q7 3 6 6-2 6-8 5Q18 44 19 26z" fill="#fff"/></svg></div>
    <div class="app"><svg viewBox="0 0 67 67"><rect x="6.500" y="10" width="54" height="47" rx="2" fill="#050808" stroke="#aab5b8" stroke-width="1.300"/><path d="M10.500 14h46v38h-46z" fill="#12201d"/><path d="M16 14v38M22 14v38M28 14v38M34 14v38M40 14v38M46 14v38M52 14v38M10.500 22h46M10.500 33h46M10.500 44h46M10.500 28h46M10.500 38h46" stroke="#3c6660" stroke-width=".7"/><path d="M10.500 37h9l3-3 3 3h3l2-19 2 24 2-5h3l3-5 3 0 3 5 4-2 3 2" fill="none" stroke="#7fd6bc" stroke-width="1.200"/></svg></div>
    <div class="app"><svg viewBox="0 0 67 67"><circle cx="33.500" cy="33.500" r="27.500" fill="url(#steel)"/><circle cx="33.500" cy="33.500" r="24.500" fill="url(#steel)" stroke="#b9bec2" stroke-width=".8"/><path d="M50 16.500q-13 2-19 14-10-1-17 6l10 0 3 5-6 5-3 6 8-5 3-4 3 4 2 6q6-6 6-16Q49 31 50 16.500z" fill="#4c5056"/><circle cx="39" cy="27.500" r="3.200" fill="#c6d0d6"/></svg></div>
    <div class="app"><svg viewBox="0 0 67 67"><rect x="6" y="8" width="55" height="51" rx="2.500" fill="url(#steel)"/><circle cx="33.500" cy="33.500" r="22.500" fill="#242526"/><circle cx="33.500" cy="33.500" r="16.500" fill="none" stroke="#aeaba6" stroke-width="3.500"/><circle cx="33.500" cy="33.500" r="19" fill="none" stroke="#aeaba6" stroke-width="3" stroke-dasharray="2.200 1.780"/><path d="M33.500 33.500h16M33.500 33.500l-8.500-14M33.500 33.500l-8.500 14" stroke="#aeaba6" stroke-width="3.200"/><circle cx="33.500" cy="33.500" r="3.500" fill="#8c8a86"/></svg></div>
    <i class="sep"></i>
    <div class="app"><svg viewBox="0 0 67 67"><path d="M4.500 14q0-3 2-3h15q2 0 3 4.500h36q2 0 2 2V25h-58z" fill="#4b7c9d"/><path d="M4.500 20q0-2 2-2h54q2 0 2 2v34q0 2.300-2 2.300h-54q-2 0-2-2.300z" fill="url(#bluef)"/><path d="M4.500 51.500h58M4.500 53.500h58" stroke="#5c93b5" stroke-width=".7"/><circle cx="33.500" cy="35.500" r="13" fill="#4d90c0"/><path d="M30.500 28h6v8h4.500l-7.500 8.500L26 36h4.500z" fill="#7bb4da"/></svg></div>
    <div class="app"><svg viewBox="0 0 67 67"><path d="M11.500 12q22-11 44 0L50 56q-3 5.500-16.500 5.500T17 56z" fill="url(#trash)"/><ellipse cx="33.500" cy="12" rx="22" ry="5.500" fill="#2d2f31" stroke="#606365" stroke-width="1"/><ellipse cx="21.500" cy="55" rx="4" ry="5" fill="#8a8f92" opacity=".35"/></svg></div>
  </footer>
</div>
</body>
</html>
```
FILE: styles.css
```css
/* 0.1rem is one point of the desktop */
html { font-size: 16px; }
* { box-sizing: border-box; }
body { margin: 0; background: #1d1413; font-family: "Liberation Sans", Arial, sans-serif; }
svg { display: block; flex: none; }
i { font-style: normal; }
.defs { position: absolute; }
.desktop { position: relative; width: 256rem; height: 144rem; overflow: hidden; display: flex; flex-direction: column; background: radial-gradient(ellipse at 50% 100%, #000 0, #000 40%, #2a1c18 100%); }

/* menu bar */
.menubar { height: 2.3rem; flex: none; display: flex; justify-content: space-between; border-bottom: .08rem solid #000; color: #fff; font: 1.38rem/2.26rem Inter, sans-serif; letter-spacing: -.02rem; white-space: nowrap;
  background: linear-gradient(90deg, #4b4042 0, #51403f 14%, #484146 24%, #43404e 37%, #50413f 46%, #4a4247 52%, #3c3d4b 58%, #333a4b 70%, #2b3449 84%, #283046 100%); }
.menus { display: grid; grid-template-columns: 3.35rem 6.55rem 4.1rem 4.3rem 5rem 6.45rem 9.1rem 5.25rem 7rem 4rem; padding-left: 2.1rem; }
.menus b { font-weight: 700; letter-spacing: -.02rem; }
.apple { width: 1.35rem; height: 1.65rem; margin-top: .15rem; }
.status { display: grid; grid-template-columns: 2.72rem 1.74rem 3rem 3.05rem 4rem 3.07rem 3.14rem 2.9rem 3.2rem 3.15rem 3.45rem 3.8rem 3.55rem 8.15rem 9.5rem 15.5rem 3.1rem 4rem; }
.status svg { height: 2.2rem; justify-self: start; width: auto; }
.status .pct { font-size: 1.22rem; letter-spacing: -.06rem; }
.kh { font-family: "Liberation Sans"; font-size: 2.05rem; line-height: 2.3rem; letter-spacing: .02rem; color: #aab4cb; }
.kh b { color: #7b60c8; }
.user { font-weight: 500; letter-spacing: -.02rem; }

/* browser chrome */
.window { flex: none; height: 133.6rem; border-radius: .5rem; overflow: hidden; background: #808080; border-bottom: .1rem solid #929292; }
.chrome { position: relative; height: 9.55rem; overflow: hidden; font-family: Inter, sans-serif; border-bottom: .05rem solid #333; color: #fff;
  background: linear-gradient(90deg, #a7a7a7 0, #a3a3a2 45%, #9b9b97 60%, #95958d 70%, #a3a29c 75%, #b5b3a6 82%, #aaa99c 88%, #949589 96%, #8a8a82 100%); }
.texture { position: absolute; right: 0; top: 0; width: 130rem; height: 9.55rem; opacity: .65; -webkit-mask-image: linear-gradient(90deg, transparent, rgba(0,0,0,.2) 40%, rgba(0,0,0,.4) 50%, #000 65%); mask-image: linear-gradient(90deg, transparent, rgba(0,0,0,.2) 40%, rgba(0,0,0,.4) 50%, #000 65%); }
.tabs { position: relative; height: 3.3rem; display: flex; font-size: 1.2rem; }
.lights { width: 10.55rem; display: flex; gap: .8rem; align-items: center; padding-left: 1.3rem; }
.lights i { width: 1.2rem; height: 1.2rem; border-radius: 50%; background: #fc605b; }
.lights i:nth-child(2) { background: #fdbc2e; }
.lights i:nth-child(3) { background: #28c840; }
.lights, .tab, .strip { background: rgba(0,0,0,.33); border-bottom: .1rem solid rgba(0,0,0,.35); }
.tab { width: 22.5rem; display: flex; align-items: center; padding: 0 1.3rem 0 .95rem; border-left: .0625rem solid rgba(255,255,255,.35); border-top: .0625rem solid rgba(255,255,255,.15); text-shadow: .05rem .15rem .15rem rgba(0,0,0,.6); white-space: nowrap; color: #e6e6e6; letter-spacing: -.045rem; }
.tab.active { background: none; border-bottom: 0; border-left: .08rem solid rgba(0,0,0,.35); border-top: .2rem solid #fff; padding-bottom: .1rem; color: #fff; }
.tab > span:not(.kipu) { width: 16.8rem; overflow: hidden; line-height: 2.4rem; padding-top: .15rem; -webkit-mask-image: linear-gradient(90deg, #000 88%, transparent 99%); mask-image: linear-gradient(90deg, #000 88%, transparent 99%); }
.fav { width: 1.6rem; height: 1.6rem; margin-right: .55rem; }
.x { width: 1rem; height: 1rem; margin-left: auto; }
.kipu { width: 1.6rem; margin-right: .55rem; display: block; flex: none; color: #6d3a9c; text-shadow: none; text-align: center; letter-spacing: -.02rem; }
.kipu b { display: block; font: 700 .66rem/.6rem "Liberation Sans"; }
.kipu i { display: block; font: .34rem/.4rem "Liberation Sans"; }
.strip { flex: 1; display: flex; align-items: center; padding: 0 0 .1rem .95rem; border-left: .0625rem solid rgba(255,255,255,.4);
  background: linear-gradient(90deg, rgba(0,0,0,.36), rgba(0,0,0,.5) 20%, rgba(0,0,0,.5) 28%, rgba(0,0,0,.28) 38%, rgba(0,0,0,.28) 60%, rgba(0,0,0,.5) 76%, rgba(0,0,0,.72) 100%); }
.plus { width: 1.4rem; height: 1.4rem; }
.toolbar { position: relative; height: 4rem; display: flex; align-items: center; padding-left: .35rem; }
.back { width: 3.35rem; height: 3.35rem; }
.fwd { width: 1.6rem; height: 1.6rem; margin-left: .8rem; }
.reload { width: 1.6rem; height: 1.6rem; margin-left: 1.65rem; }
.home { width: 1.7rem; height: 1.7rem; margin-left: 1.45rem; }
.url { width: 186.2rem; height: 3.05rem; margin-left: 12.5rem; background: rgba(255,255,255,.8); border: .1rem solid rgba(60,60,60,.45); background-clip: padding-box; border-radius: .3rem; display: flex; align-items: center; padding-left: .9rem; color: #777; font-size: 1.39rem; }
.info { width: 1.4rem; height: 1.4rem; margin-right: 1.03rem; }
.addr { flex: 1; letter-spacing: -.021rem; padding-top: .08rem; }
.addr b { font-weight: 400; color: #0c0c0d; }
.dots, .pocket, .star { width: 1.6rem; height: 1.6rem; }
.pocket { margin: 0 1.2rem; }
.star { margin-right: .6rem; }
.addons { display: flex; gap: 1.6rem; margin-left: 12.58rem; }
.addons svg { width: 1.6rem; height: 1.6rem; }
.rule { width: .0625rem; height: 3.4rem; margin-left: 1.15rem; background: rgba(255,255,255,.4); }
.burger { width: 1.25rem; height: 1.25rem; margin-left: 1.25rem; }
.bookmarks { position: relative; height: 2.2rem; display: grid; grid-template-columns: 7.95rem 10.45rem 5.57rem 8rem 7.25rem 7.45rem 9.4rem 8.05rem 14rem; padding-left: 1.2rem; font-size: 1.13rem; letter-spacing: -.015rem; text-shadow: .05rem .15rem .15rem rgba(0,0,0,.6); white-space: nowrap; }
.bookmarks > span { display: flex; align-items: center; }
.bookmarks svg { width: 1.6rem; height: 1.4rem; margin-right: .42rem; }
.bookmarks .kipu { margin-right: .35rem; }

/* page */
.top { position: relative; height: 11.25rem; background: #444; }
.row { display: flex; justify-content: space-between; height: 7.25rem; padding: 0 1.05rem 0 2rem; }
.select { width: 25.95rem; height: 3rem; margin-top: 1.85rem; border: .125rem solid #667085; background: #808080; font: 700 1.61rem/2.9rem "Liberation Sans"; color: #000; display: flex; align-items: center; justify-content: space-between; padding: .05rem .4rem 0; }
.select svg { width: 1.5rem; height: .95rem; }
.links { display: flex; font-size: 1.4rem; line-height: 2.85rem; color: #808080; gap: 2.35rem; }
.links span:last-child { margin-left: -.85rem; }
.mainnav { height: 4rem; display: grid; grid-template-columns: 13.23rem 9.2rem 13.7rem 12.73rem 8.03rem 10.41rem 18rem 10.2rem 12rem; padding-left: 1.97rem; font-size: 2.2rem; line-height: 4.05rem; color: #7f7f7f; white-space: nowrap; }
.mainnav .on { background: linear-gradient(#6e6e6e 50%, #666 54%); color: #000; padding-left: 1rem; display: flex; }
.mainnav .on + a, .mainnav .on + a + a { padding-left: 1.42rem; }
.flask { width: 2.55rem; height: 1.8rem; }
.mainnav .flask { margin: 1.5rem 0 0 .6rem; }
.profiler { position: absolute; left: 0; top: .05rem; width: 7.97rem; height: 2.05rem; background: #fff; border-bottom-right-radius: .9rem; box-shadow: 0 .1rem .2rem #888; font: 1.17rem/2.1rem "Liberation Mono", monospace; color: #111; padding-left: .75rem; }
.profiler b { color: #aaa; }
.subnav { display: flex; gap: .43rem; margin-top: 2rem; padding-left: 1.48rem; height: 2.8rem; font-size: 1.805rem; line-height: 2.95rem; white-space: nowrap; }
.subnav a { background: #666f82; padding: 0 0 0 1.2rem; display: flex; }
.subnav a:nth-child(1) { width: 16.05rem; }
.subnav a:nth-child(2) { width: 16.35rem; }
.subnav a:nth-child(3) { width: 22.55rem; }
.subnav a:nth-child(4) { width: 15.3rem; }
.subnav .on { background: #808080; border: .2rem solid #666f82; border-bottom: 0; padding: 0 0 0 1rem; line-height: 2.6rem; }
.subnav .flask { margin: .75rem 0 0 .55rem; }
.subnav .on .flask { margin-top: .55rem; }
.content { margin: 0 1.54rem 0 1.48rem; height: 38.8rem; border: .2rem solid #666f82; padding: .8rem .8rem; }
.panel { height: 31.7rem; border: .125rem solid #6f6f6f; box-shadow: 0 .1rem .1rem rgba(0,0,0,.06); }
.phead { height: 5.42rem; background: #7a7a7a; border-bottom: .125rem solid #6e6e6e; display: flex; justify-content: space-between; }
h1 { margin: 0; font-size: 2.05rem; line-height: 4.5rem; padding-left: 1.52rem; color: #1c1c1c; }
.pbtns { width: 8.75rem; height: 3rem; margin: -.1rem -.1rem 0 0; background: #667085; display: flex; padding: .97rem 0 0 1.65rem; }
.pbtns svg { width: 1.28rem; height: 1.2rem; }
.pbtns .lock { width: .8rem; height: .95rem; margin-left: 3.33rem; }
.filters { display: flex; gap: .38rem; padding: 3.62rem 0 0 3.45rem; height: 7.25rem; align-items: flex-start; color: #4f4f4f; }
.filters > div { border: .125rem solid #696969; }
.input { width: 17.4rem; height: 3.5rem; font-size: 1.46rem; line-height: 3.5rem; padding-left: .72rem; box-shadow: inset 0 .1rem .1rem rgba(0,0,0,.07); }
.pick { width: 23.2rem; height: 3.6rem; font-size: 1.57rem; line-height: 2.95rem; padding-left: 1rem; }
.all { width: 12rem; height: 3.6rem; font-size: 1.25rem; line-height: 2.85rem; padding: 0 .65rem 0 .75rem; display: flex; justify-content: space-between; color: #222; }
.all svg { width: .82rem; height: .55rem; margin-top: 1.02rem; }
.filters .go { width: 8rem; height: 3.6rem; border: .1rem solid #4e5a7c; background: #667085; }
table { table-layout: fixed; border-collapse: separate; border-spacing: 0; width: 247.8rem; margin: 4.07rem 0 0 1.5rem; border-top: .125rem solid #667085; }
.c1 { width: 21.46rem; } .c2 { width: 15.05rem; } .c3 { width: 51.9rem; } .c4 { width: 20.7rem; } .c5 { width: 26.82rem; } .c8 { width: 22.36rem; } .c9 { width: 14.55rem; }
th, td { padding: 0 0 0 .54rem; text-align: left; vertical-align: top; white-space: nowrap; }
th { font-size: 1.405rem; line-height: 2.85rem; padding-top: .15rem; height: 3.2rem; border-bottom: .2rem solid #667085; color: #000; }
td { font-size: 1.62rem; line-height: 3.4rem; height: 3.9rem; border-bottom: .125rem solid #667085; color: #141414; }
.name { letter-spacing: -.05rem; color: #000; }
.spec { letter-spacing: -.035rem; color: #000; }
.spec.alt { letter-spacing: -.01rem; }
.sort { display: inline-block; width: 1rem; height: 1rem; margin-left: .2rem; }
.sent { display: block; width: 8.4rem; height: 1.8rem; margin-top: .5rem; background: #205734; color: #8c9a91; font-size: 1.2rem; line-height: 1.85rem; text-align: center; }
.del { width: 1.1rem; height: 1rem; margin-top: 1.5rem; }
.up { width: 4.6rem; height: 3rem; margin: 2.1rem 0 0 auto; background: #667085; padding: 1.02rem 0 0 1.95rem; }
.up svg { width: .9rem; height: 1.15rem; }

/* confirmation dialog */
.modal { position: absolute; left: 95.5rem; top: 24.7rem; width: 65rem; height: 18.75rem; background: #fff; border: .1rem solid #aaa; border-radius: .6rem; box-shadow: 0 .5rem 1.5rem rgba(0,0,0,.5); }
.mhead { height: 5.6rem; background: #fafafa; border-bottom: .125rem solid #e2e2e2; border-radius: .6rem .6rem 0 0; font-weight: 700; font-size: 1.79rem; line-height: 5.78rem; padding: 0 3.35rem 0 2.45rem; color: #333; display: flex; justify-content: space-between; }
.mhead svg { width: 1rem; height: .9rem; margin-top: 1.6rem; }
.mbody { height: 5.7rem; border-bottom: .125rem solid #e2e2e2; font-size: 1.6rem; line-height: 4.65rem; padding-left: 4.05rem; }
.mfoot { display: flex; justify-content: flex-end; gap: 5.65rem; padding-right: 3.45rem; font-size: 1.4rem; line-height: 7.45rem; }
.mfoot b { letter-spacing: -.01rem; }
.ok { color: #3490cf; }

/* dock */
.dock { height: 7.9rem; margin: .2rem 5.7rem 0 5.76rem; flex: none; display: flex; background: linear-gradient(#261e1c, #30221f); border: .125rem solid #4a4442; border-bottom: 0; border-radius: .5rem .5rem 0 0; padding-left: .2rem; box-shadow: 0 0 2rem rgba(0,0,0,.25); }
.app { width: 6.69rem; height: 7.8rem; flex: none; position: relative; padding-top: .3rem; }
.app svg { width: 6.7rem; height: 6.7rem; }
.run::after { content: ""; position: absolute; left: 3.15rem; bottom: .28rem; width: .4rem; height: .4rem; border-radius: 50%; background: #aaa1a0; }
.sep { width: .1rem; height: 5.9rem; background: #5e5755; margin: 1rem 1.4rem 0 1.5rem; }
```
